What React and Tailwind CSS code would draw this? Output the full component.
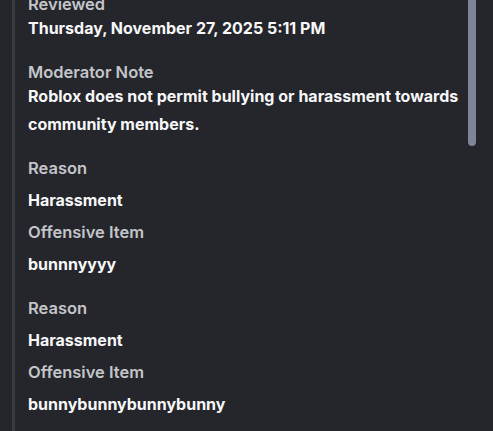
import React from 'react';

const Label = ({ children }) => (
    <p className="text-[16.5px] leading-[20px] font-semibold text-[#c4c5c9]">{children}</p>
);

const Value = ({ children }) => (
    <p className="text-[16px] leading-[28px] font-bold text-[#f7f7f8]">{children}</p>
);

const App = () => {
    const violations = [
        { reason: 'Harassment', item: 'bunnnyyyy' },
        { reason: 'Harassment', item: 'bunnybunnybunnybunny' },
    ];

    return (
        <div className="h-[431px] w-[493px] overflow-hidden bg-[#24262c] font-['Inter',sans-serif] flex">
            <div className="w-[12px] shrink-0" />
            <div className="w-[3px] shrink-0 bg-[#393b44]" />
            <div className="flex-1 -mt-[6px] pl-[13px] pr-[4px]">
                <div>
                    <Label>Reviewed</Label>
                    <Value>Thursday, November 27, 2025 5:11 PM</Value>
                </div>
                <div className="mt-[20px]">
                    <Label>Moderator Note</Label>
                    <Value>Roblox does not permit bullying or harassment towards community members.</Value>
                </div>
                {violations.map((v, i) => (
                    <div key={i} className="mt-[20px] flex flex-col gap-2">
                        <Label>Reason</Label>
                        <Value>{v.reason}</Value>
                        <Label>Offensive Item</Label>
                        <Value>{v.item}</Value>
                    </div>
                ))}
            </div>
            <div className="w-[8px] shrink-0 self-start h-[146px] mr-[17px] rounded-b-full bg-[#7f8499]" />
        </div>
    );
};

export default App;
